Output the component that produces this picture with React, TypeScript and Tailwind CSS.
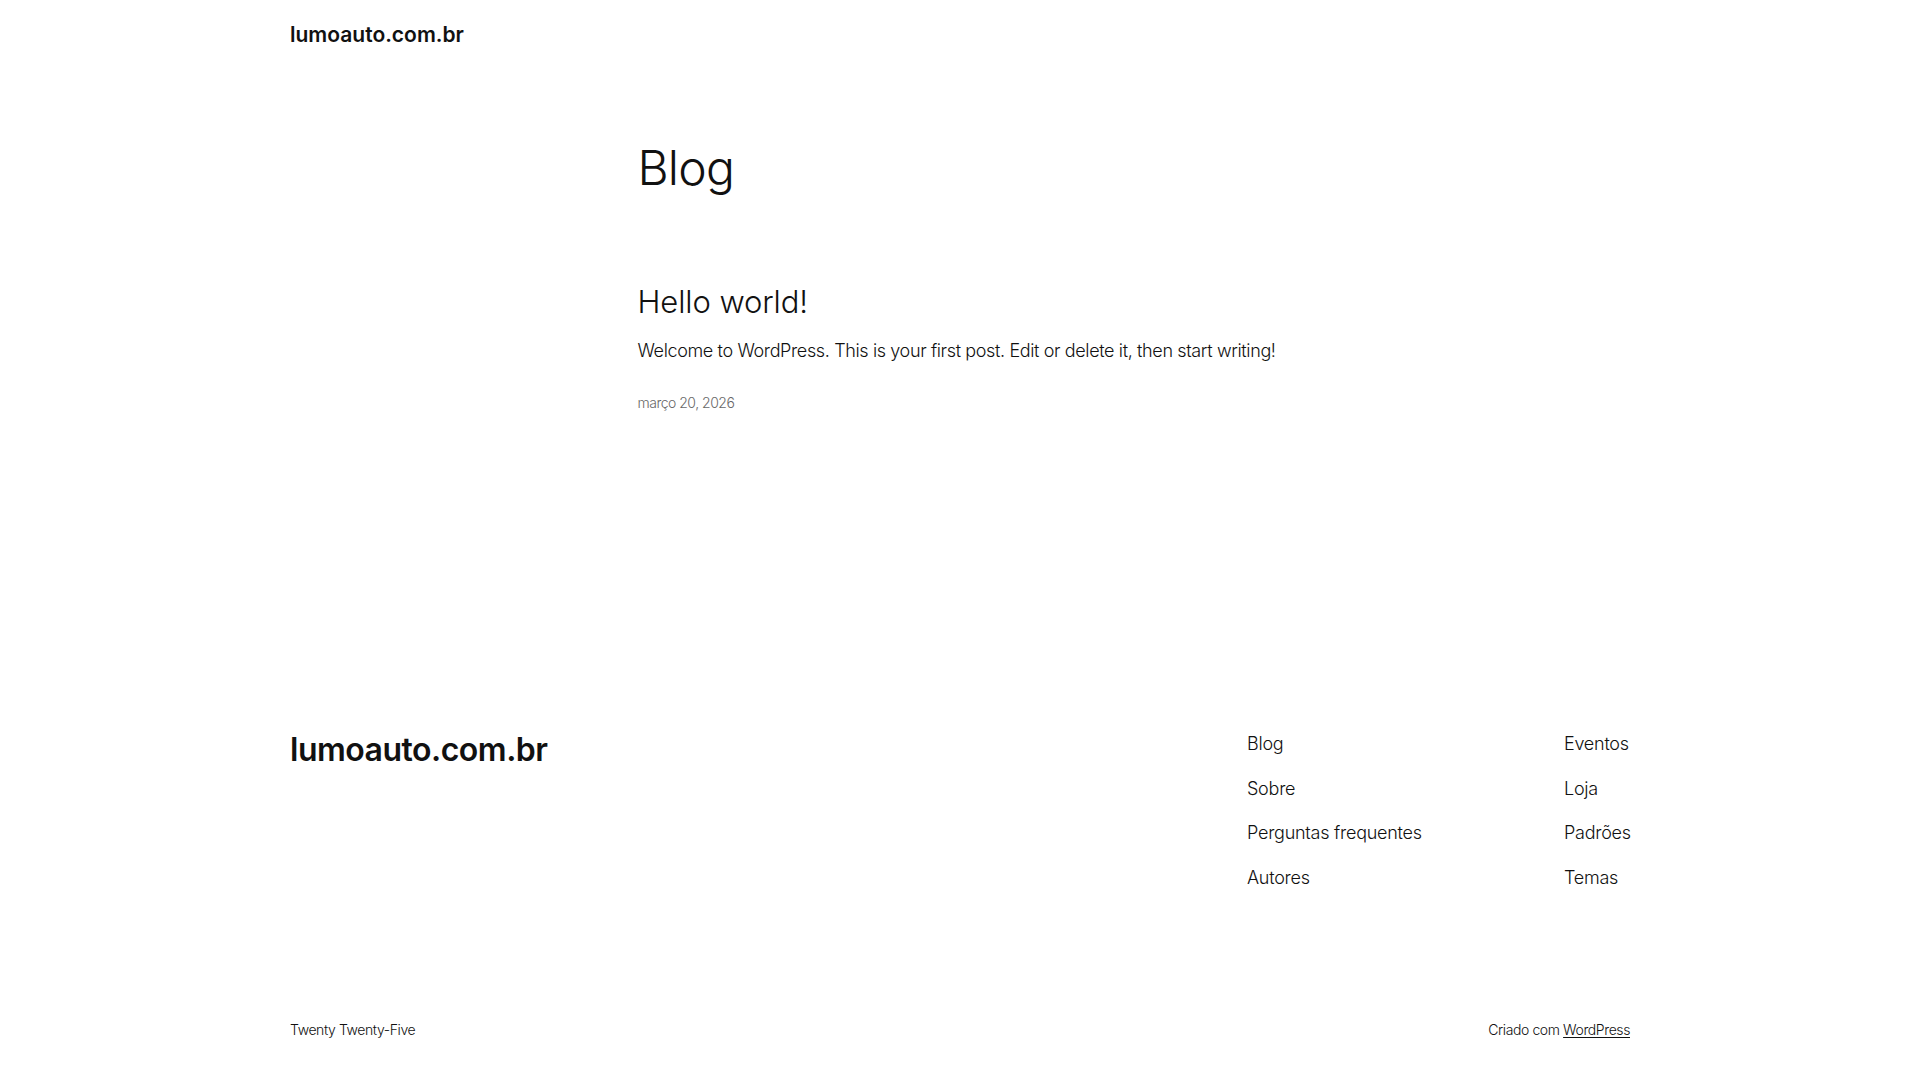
import React from "react";

const font = { fontFamily: "Inter, 'Noto Sans', sans-serif" };

export default function App() {
  return (
    <div className="min-h-[1080px] bg-white text-[#111111] flex flex-col" style={font}>
      <header className="w-[1340px] mx-auto h-[68px] flex items-center">
        <a className="mt-[2px] text-[21px] leading-[28px] font-semibold tracking-[0px]">lumoauto.com.br</a>
      </header>

      <main className="w-[645px] mx-auto flex flex-col">
        <h1 className="mt-[71px] text-[48px] leading-[58px] font-light tracking-[-0.8px]">Blog</h1>
        <h2 className="mt-[87px] text-[31px] leading-[36px] font-light tracking-[-0.1px]">Hello world!</h2>
        <p className="mt-[17px] text-[18px] leading-[27px] font-light tracking-[-0.37px]">
          Welcome to WordPress. This is your first post. Edit or delete it, then start writing!
        </p>
        <div className="mt-[28px] text-[14px] leading-[21px] font-light text-[#686868] tracking-[-0.5px]">março 20, 2026</div>
      </main>

      <footer className="w-[1340px] mx-auto mt-[316px] flex flex-col">
        <div className="flex items-start">
          <div className="mt-[2px] text-[32px] leading-[38px] font-semibold tracking-[-0.5px]">lumoauto.com.br</div>
          <nav className="ml-auto mt-[1px] flex text-[18px] leading-[27.5px] font-light tracking-[-0.25px]">
            <div className="w-[317px] flex flex-col gap-[17px]">
              <a>Blog</a>
              <a>Sobre</a>
              <a>Perguntas frequentes</a>
              <a>Autores</a>
            </div>
            <div className="w-[66px] flex flex-col gap-[17px] whitespace-nowrap">
              <a>Eventos</a>
              <a>Loja</a>
              <a>Padrões</a>
              <a>Temas</a>
            </div>
          </nav>
        </div>
        <div className="mt-[128px] flex items-center justify-between text-[14px] leading-[21px] font-light tracking-[-0.4px]">
          <span>Twenty Twenty-Five</span>
          <span>
            Criado com <a className="underline underline-offset-2">WordPress</a>
          </span>
        </div>
      </footer>
    </div>
  );
}
